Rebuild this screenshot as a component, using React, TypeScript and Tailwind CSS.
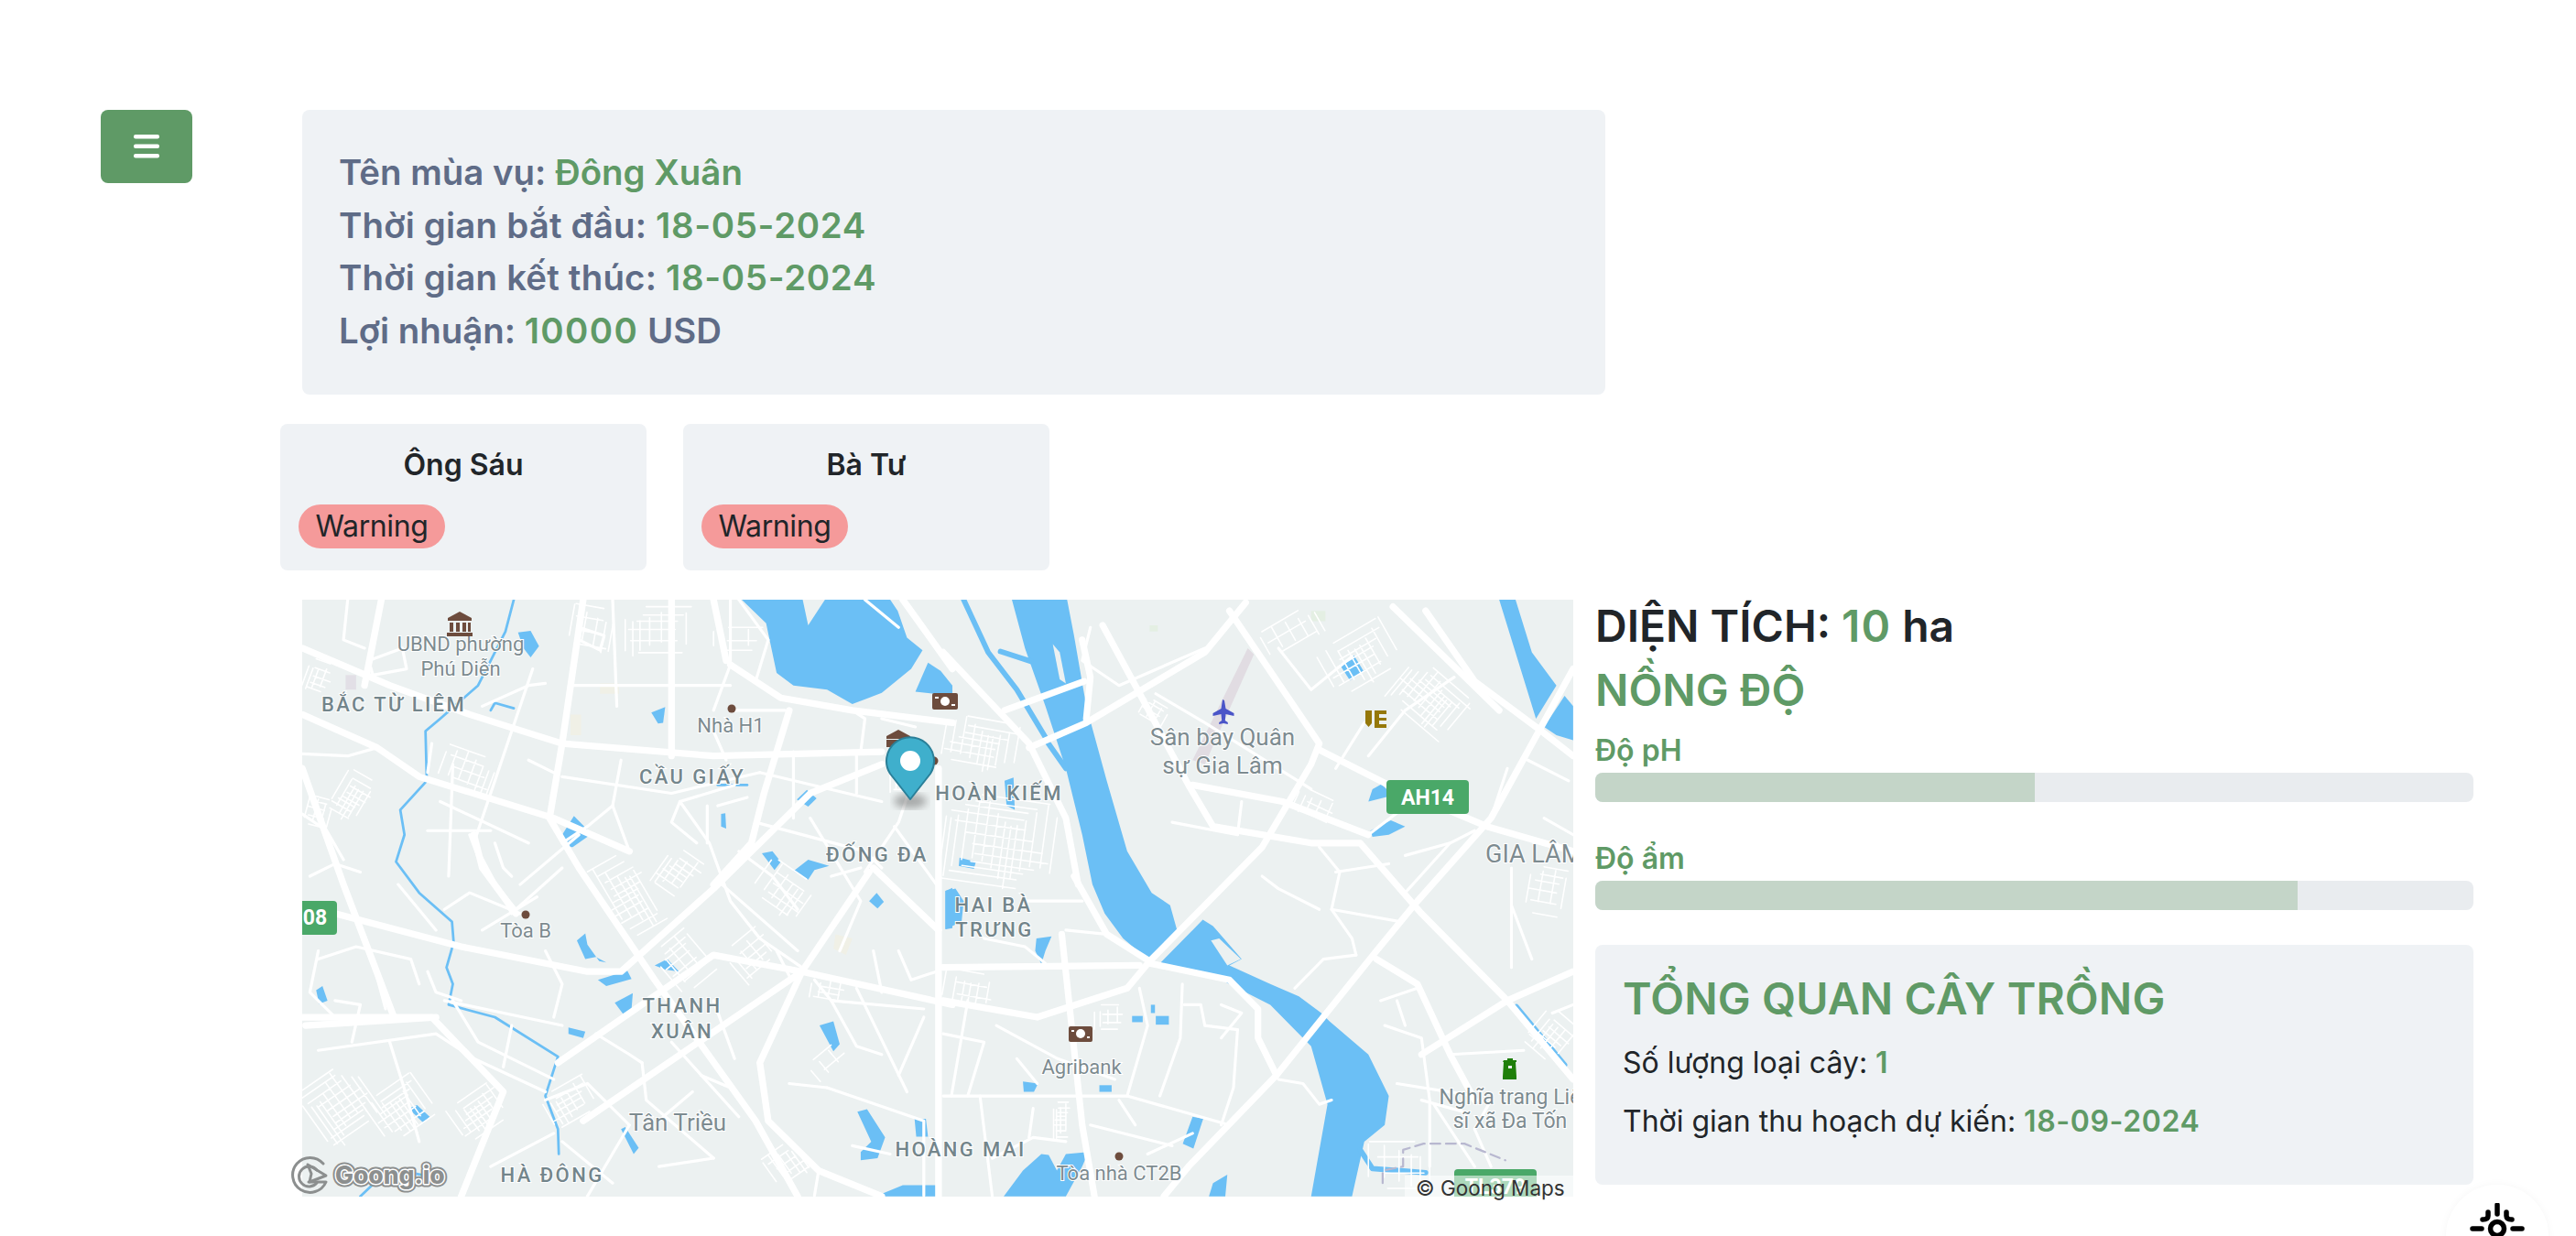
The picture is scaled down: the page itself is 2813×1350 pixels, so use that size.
const GREEN = 'text-[#5f9a66]';

// small street blocks, drawn as a rotated uneven grid
function grid(x: number, y: number, w: number, h: number, deg: number, step: number) {
  const lines: string[] = [];
  const jit = (n: number) => Math.abs(Math.sin(n * 12.9898 + x * 0.37 + y * 0.11));
  let n = 0;
  for (let i = 0; i <= w; i += step * (0.7 + jit(n) * 0.8)) {
    n++;
    lines.push(`M${(x + i).toFixed(0)},${(y + jit(n + 3) * h * 0.3).toFixed(0)}V${(y + h - jit(n + 7) * h * 0.3).toFixed(0)}`);
  }
  for (let j = 0; j <= h; j += step * (0.7 + jit(n) * 0.8)) {
    n++;
    lines.push(`M${(x + jit(n + 5) * w * 0.3).toFixed(0)},${(y + j).toFixed(0)}H${(x + w - jit(n + 9) * w * 0.3).toFixed(0)}`);
  }
  return { d: lines.join(''), t: `rotate(${deg} ${x + w / 2} ${y + h / 2})` };
}

const WEST_GRIDS = [
  grid(350, 400, 130, 100, 20, 17),
  grid(735, 650, 120, 200, -30, 15),
  grid(40, 1170, 150, 170, -35, 14),
  grid(190, 1200, 140, 130, -35, 14),
  grid(380, 1220, 130, 100, -35, 14),
  grid(30, 180, 60, 80, 20, 14),
  grid(100, 450, 80, 120, 30, 13),
  grid(790, 50, 170, 120, 0, 20),
  grid(870, 640, 90, 110, 35, 15),
  grid(880, 840, 110, 130, -40, 18),
  grid(1130, 1350, 90, 90, -35, 14),
  grid(1230, 950, 90, 60, 10, 16),
  grid(1230, 1120, 90, 60, -40, 24),
  grid(1100, 680, 130, 110, 35, 18),
  grid(1420, 420, 60, 80, 0, 16),
  grid(1000, 100, 120, 60, 0, 28),
  grid(600, 1200, 120, 90, -30, 16),
  grid(660, 50, 100, 110, 10, 22),
  grid(1040, 840, 110, 100, -40, 20),
  grid(30, 510, 60, 80, 15, 14),
];

const EAST_GRIDS = [
  grid(0, 510, 270, 220, 8, 17),
  grid(0, 320, 180, 130, 10, 16),
  grid(930, 110, 180, 130, -30, 18),
  grid(1100, 210, 180, 130, 40, 13),
  grid(1430, 680, 100, 120, 10, 20),
  grid(1440, 1030, 100, 110, 40, 16),
  grid(1040, 1340, 160, 120, 0, 26),
  grid(370, 1010, 70, 60, 0, 16),
  grid(780, 70, 160, 80, -30, 24),
  grid(270, 1230, 40, 110, 0, 10),
  grid(0, 930, 120, 90, 10, 20),
  grid(480, 280, 70, 60, 30, 15),
  grid(860, 500, 100, 60, 25, 20),
];

const WEST_MAJOR = [
  'M22,150L230,240L420,310L640,380L1000,410L1400,400',
  'M22,310L200,390L300,460L620,560L800,640',
  'M100,790L400,870L700,930L780,930L1000,730L1230,500L1400,430',
  'M22,1040L330,1040L500,1220L400,1472',
  'M690,33L640,380L610,560L680,680L860,950L1100,1290L1200,1472',
  'M630,1150L1000,890L1210,930L1568,1010',
  'M690,1290L1210,930',
  'M1040,190L1160,270L1330,300L1568,330',
  'M1180,300L1120,500L1090,620L1000,720',
  'M1535,440V1472',
  'M1210,930L1110,1150L1130,1290L1250,1410L1400,1472',
  'M1380,680L1535,830',
  'M1450,33L1568,200',
  'M1370,690L1210,930',
  'M22,440L120,720L240,1040',
  'M210,33L170,240',
  'M30,1060L340,1040',
  'M900,33V410',
  'M1000,33L1030,180',
  'M430,600L450,680L530,790',
];

const WEST_MINOR = [
  'M570,200L430,620L520,790',
  'M130,33L120,130L170,150',
  'M420,600L450,680L530,780L640,680',
  'M660,240H1040',
  'M1040,33V190L1000,300',
  'M920,520L990,620L1040,760L1110,850L1210,920',
  'M1100,570L1360,640L1400,680',
  'M1020,720L1200,880',
  'M1230,560L1350,760L1300,880',
  'M1110,450L1400,520',
  'M640,460L900,500L1110,450',
  'M360,780L420,740L540,790',
  'M60,900L150,870L280,900L300,960',
  'M360,1000L640,1060',
  'M230,1100L270,1230L300,1340',
  'M60,1120L340,1080L430,1140L600,1220',
  'M830,1150L840,1240L1000,1380',
  'M900,1100L1060,1280',
  'M1270,1210L1500,1290V1470',
  'M1340,970L1460,1220',
  'M1240,950L1280,1000L1500,1020',
  'M540,720L680,600',
  'M350,520L560,620',
  'M320,590L470,590',
  'M1190,400V560',
  'M1050,300H1170',
  'M1340,400V500',
  'M760,33L770,290',
  'M380,1000L440,1100L620,1190',
  'M600,1240L700,1200L800,1300L700,1472',
  'M640,1340L760,1440',
  'M1440,880L1470,950L1530,930',
  'M1430,580L1530,720',
  'M180,180L260,150L270,200L190,215Z',
  'M22,405L130,410L200,390',
  'M330,380L320,450',
  'M450,290L560,240L600,235',
  'M680,100L740,120L730,155L680,130Z',
  'M1050,480L920,520L900,570L960,620',
  'M985,530V620',
  'M1010,530L1080,510',
  'M1480,450L1440,570L1360,690',
  'M1330,300L1360,320L1350,400',
  'M1000,350L1030,420',
  'M480,620L500,680L520,700',
  'M380,430L370,700',
  'M40,700L100,670L160,690',
  'M22,550L80,590L120,660',
  'M100,1000L160,1010L140,1100',
  'M60,880L40,980L100,1040',
  'M180,870L220,1020',
  'M320,930L340,980L400,1000',
  'M640,620L700,580L760,530',
  'M760,530L800,640',
  'M560,420L620,450',
  'M780,420L760,530',
  'M1060,640L1140,700L1200,780',
  'M1280,700L1350,680',
  'M1150,880L1180,940',
  'M1380,880L1400,980',
  'M1280,1000L1340,1110L1400,1130',
  'M1500,1040L1440,1180',
  'M1000,1000L1050,1140',
  'M970,1180L1040,1210',
  'M720,1080L800,1130L830,1150',
  'M520,1060L500,1160',
  'M600,880L640,960L620,1040',
  'M250,720L340,830',
  'M450,830L580,750',
  'M1330,1350L1420,1370',
  'M1250,1410L1240,1470',
  'M1180,1200L1270,1210',
  'M880,1280L950,1220',
  'M870,1400L1000,1380',
  'M470,1400L620,1320',
  'M1360,33L1440,100',
  'M1100,230L1130,130L1060,33',
  'M1400,320L1480,340',
];

const EAST_MAJOR = [
  'M505,905L780,630L900,430L920,380L700,60',
  'M1090,480L920,395',
  'M1090,480L1330,580L1541,640',
  'M1541,200L1340,560L1160,760L1060,880L815,1180L600,1400L540,1472',
  'M210,390L350,330L640,160L740,40',
  'M150,300L345,230',
  'M390,95L470,240L600,480L660,580L900,620L1020,620L1170,790L1380,1000L1541,1190',
  'M1380,1000L1541,930',
  'M1380,1000L1170,1130',
  'M0,1000L230,1040L450,970L505,905',
  'M0,920L480,915',
  'M610,480L830,520L1040,600',
  'M320,700L400,840L505,905',
  'M505,910L700,950L770,1020L770,1090L815,1180',
  'M1060,900L1160,960L1240,1130L1300,1240',
  'M290,840L340,1300L370,1472',
  'M1180,60L1300,230L1450,340L1541,410',
  'M1100,50L1360,300',
  'M0,160L210,380L300,560L330,720',
  'M340,130L360,220L350,320',
];

const EAST_MINOR = [
  'M0,1230H450L700,1300',
  'M360,100L340,180L430,240L640,150',
  'M520,260L640,330L900,490',
  'M730,520L720,600',
  'M920,630L970,690L950,780L1000,850L1010,890',
  'M960,690L1090,670',
  'M950,780L1120,810',
  'M780,700L820,730L920,780',
  'M860,970L930,900L1010,890',
  'M1070,1000L1160,970',
  'M1080,1060L1170,1090L1190,1240V1400',
  'M1110,1200L1300,1230',
  'M480,970L500,1060L450,1230',
  'M585,960L580,1090L530,1230',
  'M720,1070L710,1210L680,1300',
  'M820,1190L880,1200L920,1250L950,1240',
  'M590,1010H630L640,1060L720,1070',
  'M0,1080L100,1100L60,1230',
  'M130,1060L280,1140L420,1190',
  'M1130,650L1240,620L1300,590',
  'M1390,680V920',
  'M1390,770L1440,900',
  'M1200,1250L1300,1400',
  'M360,1300L560,1350',
  'M90,1230L120,1472',
  'M1340,1240L1300,1310L1340,1400',
  'M1240,1130L1420,1120',
  'M400,840L300,830',
  'M1170,790L1130,740L1240,620',
  'M960,440L1030,330',
  'M1040,600L1120,540',
  'M1040,410L1130,300L1250,220',
  'M820,150L900,250L1000,170',
  'M340,760H200',
  'M100,850L200,870L250,910',
  'M60,1000L20,1230',
  'M180,1140L230,1200',
  'M680,1010L730,1030L680,1090',
  'M1170,1240L1280,1270',
  'M1430,420L1530,470',
  'M1380,440L1340,560',
  'M1470,560L1541,600',
  'M1490,1030L1541,1010',
  'M1110,1000L1130,1060',
  'M500,1370L610,1320',
  'M120,1380L220,1330L300,1340',
  'M210,1330L220,1260',
  'M430,1240L470,1300',
  'M560,570L720,600',
];

const WEST_WATER = [
  'M1067,33L1125,90L1150,210L1190,240L1270,250L1330,285L1400,258L1470,200L1497,155L1460,125L1438,60L1420,33H1265L1225,95L1212,33Z',
  'M1480,255L1510,185L1540,205L1568,240V265Z',
  'M640,600L668,555L710,598L665,630L640,628Z',
  'M535,112L565,108L585,145L565,172L548,150Z',
  'M852,305L885,292L880,330L868,332Z',
  'M1198,515L1222,492L1245,512L1225,532Z',
  'M1115,645L1140,640L1160,665L1145,685Z',
  'M1190,688L1225,660L1275,675L1240,685L1225,708Z',
  'M1370,760L1388,740L1405,762L1390,778Z',
  'M1552,735L1568,728V825L1552,828Z',
  'M725,950L795,928L805,948L745,965Z',
  'M765,1005L808,982L805,1020L785,1032Z',
  'M860,915L890,900L918,930L885,925Z',
  'M655,1065L695,1075L690,1090L655,1080Z',
  'M1252,1060L1285,1050L1300,1105L1285,1122Z',
  'M55,975L70,965L82,1000L62,1008Z',
  'M275,1260L295,1252L325,1280L310,1295Z',
  'M1342,1268L1365,1262L1408,1330L1390,1380L1350,1385V1365L1375,1340Z',
  'M1478,1285H1505L1510,1328H1482Z',
  'M1385,1472L1450,1445H1535V1472Z',
  'M675,855L695,838L700,865L728,905L745,908L720,895L695,900Z',
  'M780,1310L790,1305L822,1355L810,1370Z',
  'M1018,550L1028,548L1030,585L1018,580Z',
];

const WEST_STREAMS = [
  'M525,33L505,110L440,240L350,320L315,350L318,470L255,540L265,600L245,665L300,740L378,810L382,860L365,920L380,960L370,1010L480,1040L630,1135L600,1230L630,1310L632,1370',
  'M470,300L480,282L525,295',
  'M160,1472L230,1405L330,1425',
  'M1010,480H1080',
];

const EAST_WATER = [
  'M168,33H303L320,120L350,290L400,470L450,640L510,740L555,770L572,830L500,900L440,850L395,790L365,720L340,600L300,440L250,290L200,150Z',
  'M530,910L610,830L635,805L660,820L730,900L700,915L800,960L870,990L925,1030L945,1050L1040,1130L1090,1230L1080,1300L1030,1340L1000,1472H900L940,1250L900,1110L880,1090L800,1010L660,940Z',
  'M1360,33H1400L1440,160L1500,240L1450,320Z',
  'M1470,340L1520,265L1541,290V372L1500,360Z',
  'M970,190L1005,168L1028,205L995,228Z',
  'M40,655L80,665L75,682L38,675Z',
  'M5,735L30,730L50,760L45,810L5,828Z',
  'M228,850L265,845L250,880L240,912L225,880Z',
  'M150,470L172,462L175,540L155,530Z',
  'M462,1037H488V1052H462Z',
  'M520,1037H552V1058H520Z',
  'M508,1010H518V1030H508Z',
  'M195,1195L232,1200L222,1220H197Z',
  'M382,1204H412V1220H382Z',
  'M610,1280L636,1285L612,1357L586,1345Z',
  'M148,1472L195,1410L240,1370L258,1372L278,1410L300,1370L355,1365L340,1400L300,1472Z',
  'M1050,490L1072,478L1100,505L1040,520Z',
  'M1045,590L1095,565L1130,580L1090,600L1050,605Z',
  'M660,1440L695,1420L690,1472H650Z',
];

const EAST_STREAMS = [
  'M50,33L110,160L180,250L250,365',
  'M250,370L300,440',
  'M140,158L215,182',
  'M1402,1015L1520,1155',
  'M1020,1360L1050,1405L1180,1415',
];

const LABELS: [string, number, number, number][] = [
  ['UBND phường', 503, 711, 22],
  ['Phú Diễn', 503, 738, 22],
  ['Nhà H1', 798, 800, 22],
  ['Tòa B', 574, 1024, 22],
  ['Tân Triều', 740, 1235, 26],
  ['Sân bay Quân', 1335, 814, 26],
  ['sự Gia Lâm', 1335, 845, 26],
  ['Agribank', 1181, 1173, 22],
  ['Tòa nhà CT2B', 1222, 1289, 22],
  ['Nghĩa trang Liệ', 1649, 1206, 23],
  ['sĩ xã Đa Tốn', 1649, 1232, 23],
];

const AREAS: [string, number, number][] = [
  ['BẮC TỪ LIÊM', 430, 777],
  ['CẦU GIẤY', 756, 856],
  ['HOÀN KIẾM', 1091, 874],
  ['ĐỐNG ĐA', 958, 941],
  ['HAI BÀ', 1085, 996],
  ['TRƯNG', 1086, 1023],
  ['THANH', 745, 1106],
  ['XUÂN', 745, 1134],
  ['HÀ ĐÔNG', 603, 1291],
  ['HOÀNG MAI', 1049, 1263],
];

function MapView() {
  return (
    <div className="relative w-[1388px] h-[652px] shrink-0">
      <svg className="block overflow-visible" width="1388" height="652" viewBox="330 655 1388 652">
        <defs>
          <clipPath id="mapclip">
            <rect x="330" y="655" width="1388" height="652" />
          </clipPath>
          <filter id="pinblur">
            <feGaussianBlur stdDeviation="4" />
          </filter>
        </defs>
        <g clipPath="url(#mapclip)">
          <rect x="330" y="655" width="1388" height="652" fill="#ecf1f1" />
          <g transform="translate(320 640) scale(0.4592 0.4529)" fill="none" strokeLinecap="round" strokeLinejoin="round">
            {WEST_WATER.map((d) => <path key={d} d={d} fill="#6bbff5" />)}
            {WEST_STREAMS.map((d) => <path key={d} d={d} stroke="#6bbff5" strokeWidth="6" />)}
            <path d="M125,215h25v35h-25z" fill="#e2dfe6" />
            <path d="M730,235h45v25h-45zM660,310h25v50h-25zM1290,840l40,10l-15,40l-30,-15z" fill="#f0f0e6" />
            {WEST_GRIDS.map((g) => <path key={g.t + g.d.length} d={g.d} transform={g.t} stroke="#fff" strokeWidth="3.500" />)}
            {WEST_MINOR.map((d) => <path key={d} d={d} stroke="#fff" strokeWidth="7" />)}
            {WEST_MAJOR.map((d) => <path key={d} d={d} stroke="#fff" strokeWidth="16" />)}
          </g>
          <g transform="translate(1030 640) scale(0.4464 0.4529)" fill="none" strokeLinecap="round" strokeLinejoin="round">
            {EAST_WATER.map((d) => <path key={d} d={d} fill="#6bbff5" />)}
            {EAST_STREAMS.map((d) => <path key={d} d={d} stroke="#6bbff5" strokeWidth="13" />)}
            <path d="M745,150L760,165L640,430L610,420Z" fill="#e1dce2" />
            <path d="M268,140L285,160L300,235L285,225Z" fill="#ecf1f1" />
            <path d="M655,855L675,850L728,900L695,915Z" fill="#ecf1f1" />
            <path d="M900,60h35v25h-35zM505,95h20v15h-20z" fill="#e4efe3" />
            {EAST_GRIDS.map((g) => <path key={g.t + g.d.length} d={g.d} transform={g.t} stroke="#fff" strokeWidth="3.500" />)}
            {EAST_MINOR.map((d) => <path key={d} d={d} stroke="#fff" strokeWidth="7" />)}
            {EAST_MAJOR.map((d) => <path key={d} d={d} stroke="#fff" strokeWidth="16" />)}
            <path d="M1075,1440l0,-30l50,-10l0,-40l50,-15l100,0l100,40" stroke="#b8b8d0" strokeWidth="5" strokeDasharray="24 14" />
          </g>

          {LABELS.map(([t, x, y, s]) => (
            <text key={t} x={x} y={y} textAnchor="middle" fontFamily="Roboto, sans-serif" fontSize={s} fill="#7d8b90" stroke="#fff" strokeWidth="2" paintOrder="stroke">{t}</text>
          ))}
          {AREAS.map(([t, x, y]) => (
            <text key={t} x={x} y={y} textAnchor="middle" fontFamily="Roboto, sans-serif" fontWeight="500" fontSize="22" letterSpacing="2.4" fill="#73858b" stroke="#fff" strokeWidth="2" paintOrder="stroke">{t}</text>
          ))}
          <text x="1622" y="942" fontFamily="Roboto, sans-serif" fontSize="27" fill="#7d8b90" stroke="#fff" strokeWidth="2" paintOrder="stroke">GIA LÂM</text>

          {/* route shields */}
          <rect x="320" y="984" width="48" height="37" rx="4" fill="#4aa868" />
          <text x="344" y="1010" textAnchor="middle" fontFamily="Roboto, sans-serif" fontWeight="700" fontSize="23" fill="#fff">08</text>
          <rect x="1514" y="852" width="90" height="37" rx="4" fill="#4aa868" />
          <text x="1559" y="879" textAnchor="middle" fontFamily="Roboto, sans-serif" fontWeight="700" fontSize="23" fill="#fff">AH14</text>
          <rect x="1588" y="1277" width="90" height="37" rx="4" fill="#4aa868" />
          <text x="1633" y="1304" textAnchor="middle" fontFamily="Roboto, sans-serif" fontWeight="700" fontSize="23" fill="#fff">TL379</text>

          {/* poi dots */}
          <circle cx="799" cy="774" r="4.500" fill="#6d4c3d" />
          <circle cx="574" cy="999" r="4.500" fill="#6d4c3d" />
          <circle cx="1222" cy="1263" r="4.500" fill="#6d4c3d" />
          <circle cx="1020" cy="831" r="4.500" fill="#6d4c3d" />

          {/* town hall */}
          <path d="M502,668L489,675V678H515V675ZM491,680h4v10h-4zM498,680h4v10h-4zM505,680h4v10h-4zM511,680h3v10h-3zM488,691h28v4h-28z" fill="#6d4c3d" />
          <path d="M981,797L968,804V807H994V804ZM968,808h26v8h-26z" fill="#6d4c3d" />

          {/* banks */}
          <rect x="1018" y="757" width="28" height="18" rx="2" fill="#6d4c3d" />
          <circle cx="1032" cy="766" r="5" fill="#fff" />
          <rect x="1167" y="1121" width="26" height="17" rx="2" fill="#6d4c3d" />
          <circle cx="1180" cy="1129" r="5" fill="#fff" />
          <path d="M1021,761h4v2h-4zM1039,769h4v2h-4zM1170,1125h3v2h-3zM1187,1132h3v2h-3z" fill="#fff" />

          {/* airport */}
          <path d="M1335,764l2,1l1.5,9l9,5v3l-9,-2l-.7,7l3,2v2l-4.800,-1l-4.800,1v-2l3,-2l-.7,-7l-9,2v-3l9,-5z" fill="#4a55c8" />

          {/* yellow marker */}
          <path d="M1491,776h7v14l-3.500,4l-3.500,-4zM1501,776h13v4h-8v4h8v3h-8v4h8v4h-13z" fill="#95780a" />

          {/* cemetery */}
          <path d="M1642,1158h4v-2h6v2h4v2h-1l1,16v3h-15v-3l1,-16h-1zM1647,1164v3h4v-3z" fill="#1f7f0a" />

          {/* pin */}
          <ellipse cx="994" cy="875" rx="18" ry="8" fill="#555" opacity="0.45" filter="url(#pinblur)" />
          <path d="M994,873L972,845A26,26 0 1 1 1016,845Z" fill="#3fafcc" stroke="#2a7f98" strokeWidth="2" strokeLinejoin="round" />
          <circle cx="994" cy="831" r="11" fill="#fff" />

          {/* attribution */}
          <rect x="1534" y="1284" width="184" height="23" fill="#fff" opacity="0.55" />
        </g>
        <text x="1546" y="1306" fontFamily="Inter, sans-serif" fontSize="22.500" fill="#333">© Goong Maps</text>

        {/* goong logo */}
        <g fill="none" stroke="#8c8f8f" strokeWidth="3" strokeLinecap="round" strokeLinejoin="round">
          <path d="M353,1271A19,19 0 1 0 356,1291H337" />
          <path d="M346,1278A11,11 0 1 0 346,1292" />
          <path d="M336,1272L356,1284L338,1291L340,1282Z" />
        </g>
        <text x="366" y="1293" fontFamily="Inter, sans-serif" fontWeight="800" fontSize="26.500" fill="#8c8f8f" stroke="#8c8f8f" strokeWidth="7" strokeLinejoin="round" paintOrder="stroke">Goong.io</text>
        <text x="366" y="1293" fontFamily="Inter, sans-serif" fontWeight="800" fontSize="26.500" fill="#8c8f8f" stroke="#fff" strokeWidth="3" strokeLinejoin="round" paintOrder="stroke">Goong.io</text>
      </svg>
    </div>
  );
}

function PersonCard({ name }: { name: string }) {
  return (
    <div className="w-[400px] h-[160px] rounded-lg bg-[#eff2f5] px-5 pt-[21px]">
      <h5 className="text-center text-[32px] leading-[48px] font-semibold text-[#212529]">{name}</h5>
      <span className="mt-[19px] block w-[160px] h-[48px] rounded-[24px] bg-[#f59a9a] text-center text-[32px] tracking-[-0.4px] leading-[47px] text-[#212529]">Warning</span>
    </div>
  );
}

function Meter({ label, value }: { label: string; value: number }) {
  return (
    <div className="mb-[38px]">
      <div className={`text-[32px] leading-[48px] font-semibold ${GREEN}`}>{label}</div>
      <div className="h-8 rounded-lg bg-[#e9ecef] overflow-hidden">
        <div className="h-full bg-[#c4d5c8]" style={{ width: `${value}%` }} />
      </div>
    </div>
  );
}

export default function App() {
  return (
    <div className="h-[1350px] overflow-hidden bg-white pt-[120px] font-['Inter',sans-serif]">
      <div className="flex items-start pl-[110px]">
        <button className="w-[100px] h-20 shrink-0 rounded-lg bg-[#5f9a66] flex items-center justify-center">
          <svg width="28" height="26" viewBox="0 0 28 26" fill="#fff">
            <rect y="0" width="28" height="4.500" rx="2" />
            <rect y="10.500" width="28" height="4.500" rx="2" />
            <rect y="21" width="28" height="4.500" rx="2" />
          </svg>
        </button>

        <div className="ml-[96px] flex flex-col">
          <div className="ml-6 w-[1423px] h-[311px] rounded-lg bg-[#eff2f5] pl-10 pt-10 text-[38.4px] leading-[57.6px] font-semibold text-[#5f6c87]">
            <div>Tên mùa vụ: <span className={GREEN}>Đông Xuân</span></div>
            <div className="tracking-[0.2px]">Thời gian bắt đầu: <span className={`tracking-[0.7px] ${GREEN}`}>18-05-2024</span></div>
            <div className="tracking-[0.2px]">Thời gian kết thúc: <span className={`tracking-[0.7px] ${GREEN}`}>18-05-2024</span></div>
            <div>Lợi nhuận: <span className={`tracking-[1.4px] ${GREEN}`}>10000</span> USD</div>
          </div>

          <div className="mt-8 flex gap-10">
            <PersonCard name="Ông Sáu" />
            <PersonCard name="Bà Tư" />
          </div>

          <div className="mt-8 ml-6 flex gap-6">
            <MapView />
            <div className="w-[959px] shrink-0">
              <h3 className="text-[48px] leading-[57.6px] font-semibold text-[#212529]">DIỆN TÍCH: <span className={`tracking-[1px] ${GREEN}`}>10</span> ha</h3>
              <h3 className={`mt-3 mb-[14px] text-[48px] leading-[57.6px] font-semibold ${GREEN}`}>NỒNG ĐỘ</h3>
              <Meter label="Độ pH" value={50} />
              <Meter label="Độ ẩm" value={80} />
              <div className="h-[262px] rounded-lg bg-[#eff2f5] px-[30px] pt-[30px]">
                <h3 className={`mb-[17px] text-[48px] leading-[57.6px] font-semibold tracking-[0.1px] ${GREEN}`}>TỔNG QUAN CÂY TRỒNG</h3>
                <p className="mb-4 text-[32px] leading-[48px] text-[#212529]">Số lượng loại cây: <span className={`font-semibold ${GREEN}`}>1</span></p>
                <p className="text-[32px] leading-[48px] text-[#212529]">Thời gian thu hoạch dự kiến: <span className={`font-semibold tracking-[0.6px] ${GREEN}`}>18-09-2024</span></p>
              </div>
            </div>
          </div>
        </div>
      </div>

      {/* floating help widget */}
      <div className="fixed left-[2671px] top-[1294px] w-[112px] h-[112px] rounded-full bg-white shadow-[0_0_10px_rgba(0,0,0,0.04)] flex justify-center">
        <svg className="mt-[20px]" width="60" height="40" viewBox="0 0 60 40" fill="none" stroke="#000" strokeWidth="5.500" strokeLinecap="round">
          <path d="M30,2V12" />
          <path d="M3,28H13M47,28H57" />
          <path d="M20,10V14Q20,18 14,18" />
          <path d="M40,10V14Q40,18 46,18" />
          <circle cx="30" cy="28" r="7.500" />
        </svg>
      </div>
    </div>
  );
}
